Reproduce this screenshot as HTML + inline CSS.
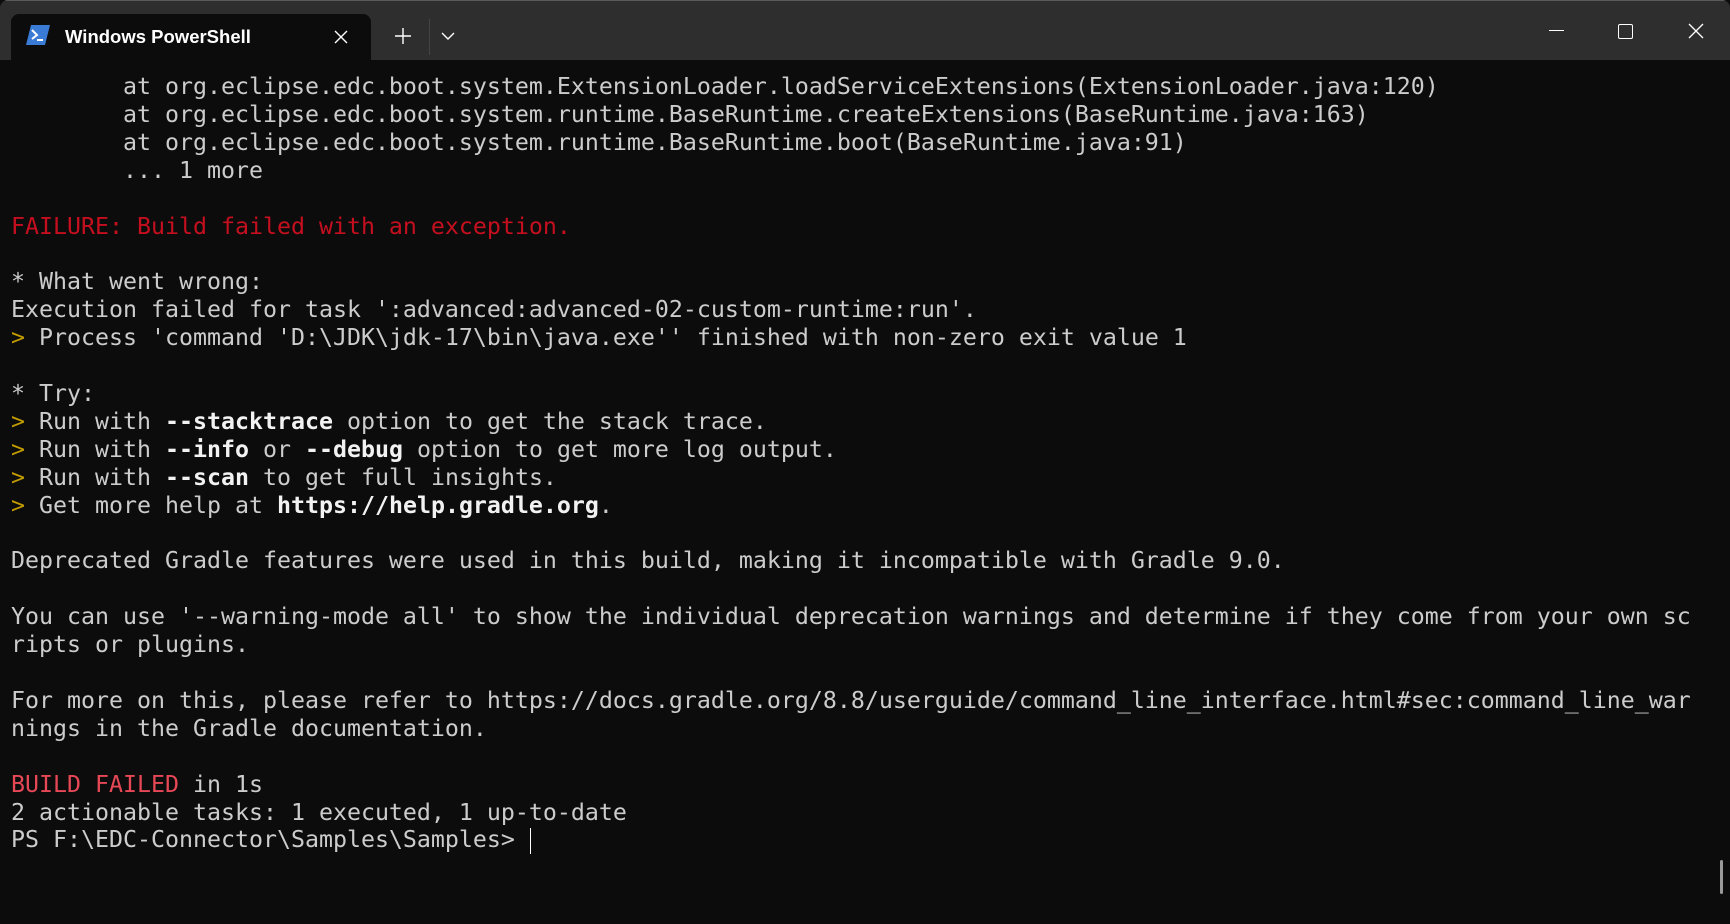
<!DOCTYPE html>
<html><head><meta charset="utf-8"><style>
html,body{margin:0;padding:0;width:1730px;height:924px;overflow:hidden;background:#0c0c0c;}
.win{position:absolute;left:0;top:0;width:1730px;height:924px;background:#0c0c0c;border-radius:8px 8px 0 0;overflow:hidden;}
.title{position:absolute;left:0;top:0;width:1730px;height:60px;background:#2e2e2e;border-top:1px solid #5a5a5a;box-sizing:border-box;}
.tab{position:absolute;left:11px;top:13px;width:360px;height:47px;background:#0c0c0c;border-radius:8px 8px 0 0;}
.tabt{position:absolute;left:54px;top:12px;font:bold 18.5px "Liberation Sans",sans-serif;color:#fff;}
.term{position:absolute;left:11px;top:73px;font-family:"DejaVu Sans Mono","Liberation Mono",monospace;font-size:23.25px;line-height:27.9px;color:#cccccc;white-space:pre;}
.r{color:#c50f1f}.R{color:#e74856}.y{color:#c19c00}.b{color:#f2f2f2;font-weight:bold}
</style></head><body><div class="win">
<div class="title">
 <div class="tab">
  <svg style="position:absolute;left:15px;top:10px" width="24" height="22" viewBox="0 0 24 22"><polygon points="5,1 24,1 19,21 0,21" fill="#3a7bd5"/><polyline points="6,6 11,11 6,15" fill="none" stroke="#fff" stroke-width="2"/><line x1="11" y1="16" x2="17" y2="16" stroke="#fff" stroke-width="2"/></svg>
  <div class="tabt">Windows PowerShell</div>
  <svg style="position:absolute;left:323px;top:16px" width="14" height="14"><path d="M1 1L13 13M13 1L1 13" stroke="#fff" stroke-width="1.4"/></svg>
 </div>
 <svg style="position:absolute;left:395px;top:27px" width="16" height="16"><path d="M8 0V16M0 8H16" stroke="#fff" stroke-width="1.4"/></svg>
 <div style="position:absolute;left:429px;top:18px;width:1px;height:36px;background:#444"></div>
 <svg style="position:absolute;left:441px;top:31px" width="14" height="9"><path d="M1 1L7 7L13 1" stroke="#fff" stroke-width="1.4" fill="none"/></svg>
 <div style="position:absolute;left:1549px;top:29px;width:15px;height:1px;background:#fff"></div>
 <div style="position:absolute;left:1618px;top:23px;width:13px;height:13px;border:1.2px solid #fff;border-radius:2px"></div>
 <svg style="position:absolute;left:1688px;top:22px" width="16" height="16"><path d="M1 1L15 15M15 1L1 15" stroke="#fff" stroke-width="1.3"/></svg>
</div>
<div class="term">        at org.eclipse.edc.boot.system.ExtensionLoader.loadServiceExtensions(ExtensionLoader.java:120)
        at org.eclipse.edc.boot.system.runtime.BaseRuntime.createExtensions(BaseRuntime.java:163)
        at org.eclipse.edc.boot.system.runtime.BaseRuntime.boot(BaseRuntime.java:91)
        ... 1 more

<span class="r">FAILURE: Build failed with an exception.</span>

* What went wrong:
Execution failed for task ':advanced:advanced-02-custom-runtime:run'.
<span class="y">&gt;</span> Process 'command 'D:\JDK\jdk-17\bin\java.exe'' finished with non-zero exit value 1

* Try:
<span class="y">&gt;</span> Run with <span class="b">--stacktrace</span> option to get the stack trace.
<span class="y">&gt;</span> Run with <span class="b">--info</span> or <span class="b">--debug</span> option to get more log output.
<span class="y">&gt;</span> Run with <span class="b">--scan</span> to get full insights.
<span class="y">&gt;</span> Get more help at <span class="b">https://help.gradle.org</span>.

Deprecated Gradle features were used in this build, making it incompatible with Gradle 9.0.

You can use '--warning-mode all' to show the individual deprecation warnings and determine if they come from your own sc
ripts or plugins.

For more on this, please refer to https://docs.gradle.org/8.8/userguide/command_line_interface.html#sec:command_line_war
nings in the Gradle documentation.

<span class="R">BUILD FAILED</span> in 1s
2 actionable tasks: 1 executed, 1 up-to-date
PS F:\EDC-Connector\Samples\Samples&gt; </div>
<div style="position:absolute;left:530px;top:828px;width:1px;height:26px;background:#fff"></div>
<div style="position:absolute;left:1720px;top:860px;width:3px;height:34px;background:#9a9a9a;border-radius:2px"></div>
</div></body></html>
